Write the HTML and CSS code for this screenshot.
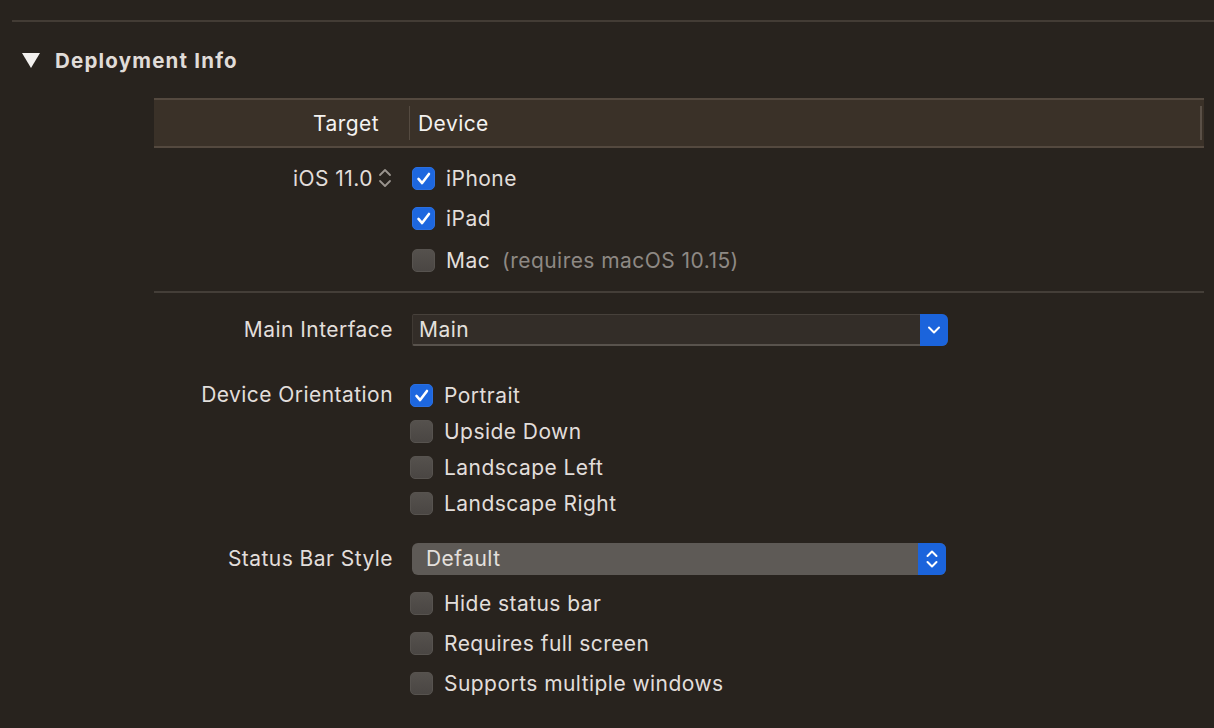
FILE: index.html
```html
<!DOCTYPE html>
<html>
<head>
<meta charset="utf-8">
<link rel="stylesheet" href="styles.css">
</head>
<body>
<div class="rule"></div>
<div class="heading">
  <svg class="tri" width="18" height="15" viewBox="0 0 18 15"><path d="M0 0 H18 L9 15 Z" fill="#f2f0ee"/></svg>
  <span>Deployment Info</span>
</div>

<div class="section">
  <div class="thead">
    <div class="th-target">Target</div>
    <div class="th-sep"></div>
    <div class="th-device">Device</div>
    <div class="th-end"></div>
  </div>

  <div class="grid device-grid">
    <div class="label ios">iOS 11.0
      <svg class="stepper" width="14" height="22" viewBox="0 0 14 22"><path d="M2 8 L7 3 L12 8 M2 14 L7 19 L12 14" fill="none" stroke="#9a948e" stroke-width="1.8" stroke-linecap="round" stroke-linejoin="round"/></svg>
    </div>
    <div class="controls">
      <div class="row r40 dev"><span class="cb on"><svg viewBox="0 0 23 23"><path d="M6 12 L10 16.5 L17.5 6.5" fill="none" stroke="#fff" stroke-width="2.8" stroke-linecap="round" stroke-linejoin="round"/></svg></span>iPhone</div>
      <div class="row r40 dev"><span class="cb on"><svg viewBox="0 0 23 23"><path d="M6 12 L10 16.5 L17.5 6.5" fill="none" stroke="#fff" stroke-width="2.8" stroke-linecap="round" stroke-linejoin="round"/></svg></span>iPad</div>
      <div class="row r44 dev"><span class="cb"></span>Mac<span class="note">(requires macOS 10.15)</span></div>
    </div>
  </div>

  <div class="sep"></div>

  <div class="grid mt21">
    <div class="label lh32">Main Interface</div>
    <div class="controls">
      <div class="popup dark">
        <span class="ptext">Main</span>
        <span class="pbtn sq"><svg width="14" height="10" viewBox="0 0 14 10"><path d="M2 2.5 L7 7.5 L12 2.5" fill="none" stroke="#fff" stroke-width="2" stroke-linecap="round" stroke-linejoin="round"/></svg></span>
      </div>
    </div>
  </div>

  <div class="grid mt31">
    <div class="label lh36">Device Orientation</div>
    <div class="controls">
      <div class="row r36"><span class="cb on"><svg viewBox="0 0 23 23"><path d="M6 12 L10 16.5 L17.5 6.5" fill="none" stroke="#fff" stroke-width="2.8" stroke-linecap="round" stroke-linejoin="round"/></svg></span>Portrait</div>
      <div class="row r36"><span class="cb"></span>Upside Down</div>
      <div class="row r36"><span class="cb"></span>Landscape Left</div>
      <div class="row r36"><span class="cb"></span>Landscape Right</div>
    </div>
  </div>

  <div class="grid mt22">
    <div class="label lh32">Status Bar Style</div>
    <div class="controls">
      <div class="popup light">
        <span class="ptext">Default</span>
        <span class="pbtn"><svg width="14" height="22" viewBox="0 0 14 22"><path d="M2.5 8 L7 3.5 L11.5 8 M2.5 14 L7 18.5 L11.5 14" fill="none" stroke="#fff" stroke-width="2" stroke-linecap="round" stroke-linejoin="round"/></svg></span>
      </div>
      <div class="checks">
        <div class="row r40"><span class="cb"></span>Hide status bar</div>
        <div class="row r40"><span class="cb"></span>Requires full screen</div>
        <div class="row r40"><span class="cb"></span>Supports multiple windows</div>
      </div>
    </div>
  </div>
</div>
</body>
</html>
```

FILE: styles.css
```css
* { box-sizing: border-box; }
html, body {
  margin: 0;
  padding: 0;
  background: #28231e;
  width: 1214px;
  height: 728px;
  overflow: hidden;
  font-family: Inter, "Liberation Sans", sans-serif;
  font-size: 21px;
  letter-spacing: 0.45px;
  color: #e2dedb;
}
.rule {
  margin: 20px 0 0 12px;
  height: 2px;
  background: #433c35;
}
.heading {
  margin-top: 18px;
  height: 40px;
  display: flex;
  align-items: center;
  padding-left: 22px;
  font-weight: 700;
  font-size: 20.5px;
  letter-spacing: 1.2px;
  color: #e0dcd8;
}
.heading .tri { margin-right: 15px; margin-top: 1px; }
.section {
  margin: 18px 0 0 154px;
  width: 1050px;
}
.thead {
  height: 50px;
  background: #3a3128;
  border-top: 2px solid #54493f;
  border-bottom: 2px solid #54493f;
  display: flex;
  align-items: center;
  color: #f4f2f0;
}
.th-target {
  width: 255px;
  text-align: right;
  padding-right: 30px;
}
.th-sep {
  width: 1px;
  height: 34px;
  background: #554b41;
}
.th-device {
  flex: 1;
  padding-left: 8px;
}
.th-end {
  width: 2px;
  height: 34px;
  background: #5a5047;
  margin-right: 2px;
}
.grid {
  display: grid;
  grid-template-columns: 256px 1fr;
}
.device-grid { margin-top: 10px; }
.label {
  text-align: right;
  padding-right: 17px;
  color: #e2dedb;
}
.label.ios {
  display: flex;
  justify-content: flex-end;
  align-items: center;
  height: 40px;
  padding-right: 18px;
  gap: 5px;
}
.lh32 { line-height: 32px; }
.lh36 { line-height: 36px; }
.controls { display: flex; flex-direction: column; }
.row {
  display: flex;
  align-items: center;
}
.row.dev { padding-left: 2px; }
.r40 { height: 40px; }
.r44 { height: 44px; }
.r36 { height: 36px; }
.cb {
  width: 23px;
  height: 23px;
  border-radius: 5px;
  background: linear-gradient(#55514d, #4a4643);
  border: 1px solid #57534f;
  margin-right: 11px;
  display: inline-flex;
  flex: none;
}
.cb.on {
  background: #1d67df;
  border-color: #2a6fe0;
}
.cb svg { width: 21px; height: 21px; }
.note {
  margin-left: 12px;
  color: #8e8984;
}
.sep {
  margin-top: 9px;
  height: 2px;
  background: #443e38;
}
.mt21 { margin-top: 21px; }
.mt31 { margin-top: 31px; }
.mt22 { margin-top: 22px; }
.popup {
  margin-left: 2px;
  height: 32px;
  display: flex;
  align-items: stretch;
}
.popup.dark {
  width: 536px;
  background: #332d28;
  border-top: 1px solid #47413b;
  border-bottom: 2px solid #59534d;
  border-left: 1px solid #403a34;
  border-radius: 2px 6px 6px 2px;
}
.popup.light {
  width: 534px;
  background: #5e5a56;
  border-radius: 6px;
}
.ptext {
  flex: 1;
  line-height: 30px;
  padding-left: 6px;
  color: #e4e0dd;
}
.popup.light .ptext { padding-left: 14px; line-height: 32px; }
.pbtn {
  width: 28px;
  background: #1b64dc;
  border-radius: 0 6px 6px 0;
  display: flex;
  align-items: center;
  justify-content: center;
}
.popup.dark .pbtn { margin: -1px 0 -2px 0; }
.checks { margin-top: 8px; }
```
